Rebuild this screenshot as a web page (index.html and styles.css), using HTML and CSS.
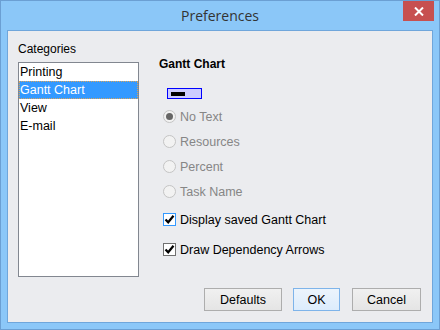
FILE: index.html
```html
<!DOCTYPE html>
<html lang="en">
<head>
  <meta charset="UTF-8" />
  <title>Preferences</title>
  <link rel="stylesheet" href="styles.css">
</head>
<body>

  <!-- Window frame -->
  <div class="window">
    <header class="titlebar">
      <span></span>
      <h1 class="title">Preferences</h1>
      <button class="close" aria-label="Close">
        <svg width="10" height="9" viewBox="0 0 10 9">
          <path d="M1 0.5 L9 8.5 M9 0.5 L1 8.5" stroke="#fff" stroke-width="2"/>
        </svg>
      </button>
    </header>

    <div class="client">
      <div class="content">

        <!-- Categories list -->
        <div class="categories">
          <div class="label">Categories</div>
          <ul class="list">
            <li>Printing</li>
            <li class="selected">Gantt Chart</li>
            <li>View</li>
            <li>E-mail</li>
          </ul>
        </div>

        <!-- Gantt chart options -->
        <div class="options">
          <h2>Gantt Chart</h2>
          <div class="swatch"><span></span></div>

          <label class="radio disabled checked"><span class="circle"></span>No Text</label>
          <label class="radio disabled"><span class="circle"></span>Resources</label>
          <label class="radio disabled"><span class="circle"></span>Percent</label>
          <label class="radio disabled"><span class="circle"></span>Task Name</label>

          <label class="check focus first">
            <span class="box">
              <svg width="11" height="11" viewBox="0 0 11 11"><path d="M1.5 5.5 L4.2 8.3 L9.5 1.8" fill="none" stroke="#000" stroke-width="2.2"/></svg>
            </span>
            Display saved Gantt Chart
          </label>
          <label class="check">
            <span class="box">
              <svg width="11" height="11" viewBox="0 0 11 11"><path d="M1.5 5.5 L4.2 8.3 L9.5 1.8" fill="none" stroke="#000" stroke-width="2.2"/></svg>
            </span>
            Draw Dependency Arrows
          </label>
        </div>
      </div>

      <!-- Dialog buttons -->
      <div class="buttons">
        <button class="btn defaults">Defaults</button>
        <button class="btn ok">OK</button>
        <button class="btn cancel">Cancel</button>
      </div>
    </div>
  </div>

</body>
</html>
```

FILE: styles.css
```css
* {
  margin: 0;
  padding: 0;
  box-sizing: border-box;
  font-family: "Liberation Sans", Arial, sans-serif;
}

body {
  width: 440px;
  height: 330px;
  overflow: hidden;
}

/* Window frame */
.window {
  width: 440px;
  height: 330px;
  background: #8bc7f8;
  border: 1px solid #6b9fd3;
  display: flex;
  flex-direction: column;
}

.titlebar {
  height: 29px;
  display: grid;
  grid-template-columns: 1fr auto 1fr;
  align-items: start;
}

.title {
  font-family: "Open Sans", sans-serif;
  font-weight: 400;
  font-size: 14px;
  color: #333;
  margin-top: 5px;
}

.close {
  justify-self: end;
  width: 31px;
  height: 20px;
  margin-right: 5px;
  border: none;
  background: #c75050;
  display: flex;
  align-items: center;
  justify-content: center;
}

/* Client area */
.client {
  margin: 0 6px 6px 6px;
  height: 293px;
  background: #ebecef;
  border: 1px solid #6fa6db;
  display: flex;
  flex-direction: column;
  padding: 11px 11px 11px 10px;
}

.content {
  flex: 1;
  display: flex;
}

.categories {
  width: 121px;
  display: flex;
  flex-direction: column;
}

.label {
  font-size: 12px;
  color: #000;
  height: 20px;
  line-height: 14px;
}

.list {
  list-style: none;
  background: #fff;
  border: 1px solid #828790;
  height: 215px;
}

.list li {
  height: 18px;
  font-size: 12.5px;
  color: #000;
  border: 1px solid transparent;
  line-height: 16px;
}

.list li.selected {
  background: #3399ff;
  color: #fff;
  border: 1px dotted #d9a35a;
}

/* Options */
.options {
  margin-left: 20px;
  display: flex;
  flex-direction: column;
  align-items: flex-start;
}

h2 {
  font-size: 12px;
  font-weight: 700;
  color: #000;
  margin-top: 15px;
  height: 15px;
}

.swatch {
  margin: 16px 0 0 8px;
  width: 35px;
  height: 11px;
  border: 1px solid #0000ff;
  background: #ccccff;
  padding: 3px 0 0 3px;
}

.swatch span {
  display: block;
  width: 14px;
  height: 4px;
  background: #000;
}

.radio,
.check {
  display: flex;
  align-items: center;
  font-size: 12.5px;
  padding-left: 4px;
  height: 13px;
}

.radio {
  margin-top: 11px;
  color: #868686;
}

.radio + .radio {
  margin-top: 12px;
}

.circle {
  width: 13px;
  height: 13px;
  border-radius: 50%;
  border: 1px solid #c4c4c4;
  background: #f2f2f2;
  margin-right: 4px;
  display: flex;
  align-items: center;
  justify-content: center;
}

.radio.checked .circle::after {
  content: "";
  width: 7px;
  height: 7px;
  border-radius: 50%;
  background: #666;
}

.check {
  color: #000;
}

.check.first {
  margin-top: 15px;
}

.check + .check {
  margin-top: 17px;
}

.box {
  width: 13px;
  height: 13px;
  border: 1px solid #707070;
  background: #fff;
  margin-right: 4px;
  display: flex;
  align-items: center;
  justify-content: center;
}

.check.focus .box {
  border-color: #3399ff;
}

/* Buttons */
.buttons {
  display: flex;
  justify-content: flex-end;
  gap: 11px;
}

.btn {
  height: 23px;
  font-size: 12.5px;
  color: #000;
  border: 1px solid #adadad;
  background: linear-gradient(#f0f0f0, #e5e5e5);
}

.defaults {
  width: 78px;
}

.ok {
  width: 47px;
  margin-right: 1px;
  border-color: #7eb4ea;
  background: linear-gradient(#ecf4fc, #dcecfc);
}

.cancel {
  width: 69px;
}
```
